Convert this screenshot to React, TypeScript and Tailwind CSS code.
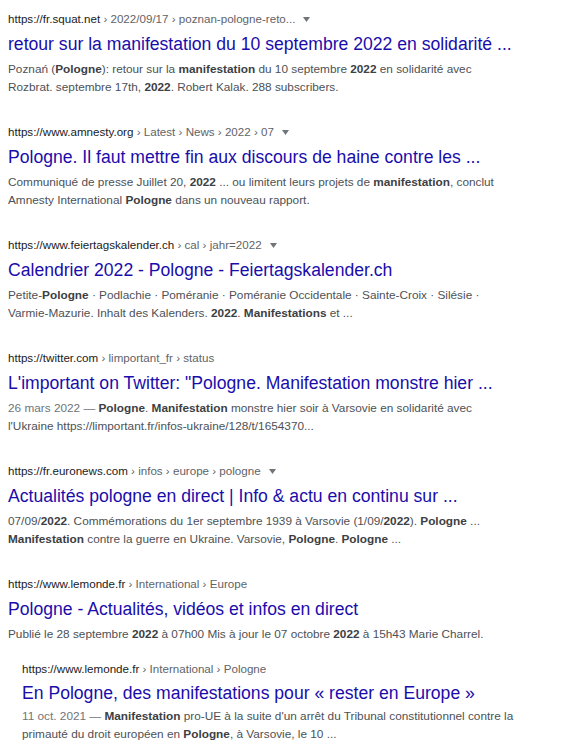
type Part = string | { b: string };

type Result = {
  domain: string;
  path: string;
  arrow?: boolean;
  title: string;
  date?: string;
  lines: Part[][];
};

const results: Result[] = [
  {
    domain: "https://fr.squat.net",
    path: " › 2022/09/17 › poznan-pologne-reto...",
    arrow: true,
    title: "retour sur la manifestation du 10 septembre 2022 en solidarité ...",
    lines: [
      ["Poznań (", { b: "Pologne" }, "): retour sur la ", { b: "manifestation" }, " du 10 septembre ", { b: "2022" }, " en solidarité avec"],
      ["Rozbrat. septembre 17th, ", { b: "2022" }, ". Robert Kalak. 288 subscribers."],
    ],
  },
  {
    domain: "https://www.amnesty.org",
    path: " › Latest › News › 2022 › 07",
    arrow: true,
    title: "Pologne. Il faut mettre fin aux discours de haine contre les ...",
    lines: [
      ["Communiqué de presse Juillet 20, ", { b: "2022" }, " ... ou limitent leurs projets de ", { b: "manifestation" }, ", conclut"],
      ["Amnesty International ", { b: "Pologne" }, " dans un nouveau rapport."],
    ],
  },
  {
    domain: "https://www.feiertagskalender.ch",
    path: " › cal › jahr=2022",
    arrow: true,
    title: "Calendrier 2022 - Pologne - Feiertagskalender.ch",
    lines: [
      ["Petite-", { b: "Pologne" }, " · Podlachie · Poméranie · Poméranie Occidentale · Sainte-Croix · Silésie ·"],
      ["Varmie-Mazurie. Inhalt des Kalenders. ", { b: "2022" }, ". ", { b: "Manifestations" }, " et ..."],
    ],
  },
  {
    domain: "https://twitter.com",
    path: " › limportant_fr › status",
    title: "L'important on Twitter: \"Pologne. Manifestation monstre hier ...",
    date: "26 mars 2022 — ",
    lines: [
      [{ b: "Pologne" }, ". ", { b: "Manifestation" }, " monstre hier soir à Varsovie en solidarité avec"],
      ["l'Ukraine https://limportant.fr/infos-ukraine/128/t/1654370..."],
    ],
  },
  {
    domain: "https://fr.euronews.com",
    path: " › infos › europe › pologne",
    arrow: true,
    title: "Actualités pologne en direct | Info & actu en continu sur ...",
    lines: [
      ["07/09/", { b: "2022" }, ". Commémorations du 1er septembre 1939 à Varsovie (1/09/", { b: "2022" }, "). ", { b: "Pologne" }, " ..."],
      [{ b: "Manifestation" }, " contre la guerre en Ukraine. Varsovie, ", { b: "Pologne" }, ". ", { b: "Pologne" }, " ..."],
    ],
  },
  {
    domain: "https://www.lemonde.fr",
    path: " › International › Europe",
    title: "Pologne - Actualités, vidéos et infos en direct",
    lines: [
      ["Publié le 28 septembre ", { b: "2022" }, " à 07h00 Mis à jour le 07 octobre ", { b: "2022" }, " à 15h43 Marie Charrel."],
    ],
  },
];

const nested: Result = {
  domain: "https://www.lemonde.fr",
  path: " › International › Pologne",
  title: "En Pologne, des manifestations pour « rester en Europe »",
  date: "11 oct. 2021 — ",
  lines: [
    [{ b: "Manifestation" }, " pro-UE à la suite d'un arrêt du Tribunal constitutionnel contre la"],
    ["primauté du droit européen en ", { b: "Pologne" }, ", à Varsovie, le 10 ..."],
  ],
};

function Line({ parts, date }: { parts: Part[]; date?: string }) {
  return (
    <div className="h-[18px] leading-[18px] text-[11.8px] text-[#4d5156] whitespace-nowrap">
      {date && <span className="text-[#70757a]">{date}</span>}
      {parts.map((p, i) =>
        typeof p === "string" ? (
          <span key={i}>{p}</span>
        ) : (
          <b key={i} className="font-bold text-[#3c4043]">
            {p.b}
          </b>
        )
      )}
    </div>
  );
}

function Entry({ r, tight }: { r: Result; tight?: boolean }) {
  return (
    <div className="flex flex-col">
      <div className="h-[18px] leading-[18px] text-[11.6px] whitespace-pre">
        <span className="text-[#202124]">{r.domain}</span>
        <span className="text-[#5f6368]">{r.path}</span>
        {r.arrow && (
          <svg width="7" height="5" viewBox="0 0 7 5" className="inline-block ml-[8px] align-middle">
            <path d="M0 0h7L3.5 5z" fill="#70757a" />
          </svg>
        )}
      </div>
      <div
        className={
          "h-[26px] leading-[26px] text-[17.6px] text-[#1a0dab] whitespace-nowrap " +
          (tight ? "mt-[2px] mb-[1px]" : "mt-[3px] mb-[3px]")
        }
      >
        {r.title}
      </div>
      {r.lines.map((l, i) => (
        <Line key={i} parts={l} date={i === 0 ? r.date : undefined} />
      ))}
    </div>
  );
}

export default function App() {
  return (
    <div className="w-[561px] h-[750px] bg-white overflow-hidden pt-[10px] pl-[8px] font-['Liberation_Sans',Arial,sans-serif]">
      <div className="flex flex-col gap-[27px]">
        {results.map((r, i) => (
          <Entry key={i} r={r} />
        ))}
      </div>
      <div className="mt-[17px] ml-[14px]">
        <Entry r={nested} tight />
      </div>
    </div>
  );
}
